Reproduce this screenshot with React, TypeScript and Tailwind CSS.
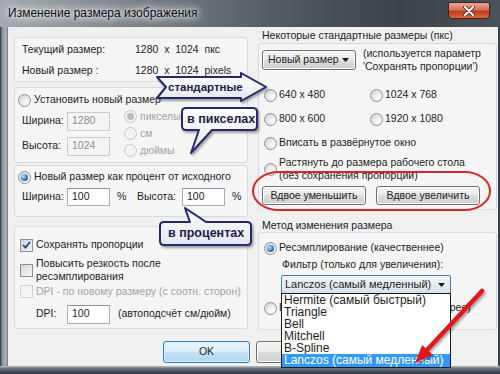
import React from "react";

type Mark = { checked?: boolean; disabled?: boolean };

const Radio: React.FC<Mark> = ({ checked, disabled }) => (
  <span
    className={
      "flex h-[13px] w-[13px] shrink-0 items-center justify-center rounded-full border " +
      (disabled
        ? "border-[#c4c7ca] bg-[#f3f3f3]"
        : "border-[#8f9295] bg-[radial-gradient(circle_at_70%_70%,#ffffff,#d8dadc_75%)]")
    }
  >
    {checked && (
      <span
        className={
          "h-[7px] w-[7px] rounded-full " +
          (disabled
            ? "bg-[#b9bdc1]"
            : "bg-[radial-gradient(circle_at_35%_35%,#b4e2ff,#2a70ba_60%,#12447c)]")
        }
      />
    )}
  </span>
);

const Check: React.FC<Mark> = ({ checked, disabled }) => (
  <span
    className={
      "flex h-[13px] w-[13px] shrink-0 items-center justify-center border " +
      (disabled
        ? "border-[#d0d2d4] bg-[#f5f5f5]"
        : checked
        ? "border-[#8f9295] bg-[linear-gradient(135deg,#c4d3e6,#f2f6fb)]"
        : "border-[#8f9295] bg-[linear-gradient(135deg,#d3d5d7,#fafafa)]")
    }
  >
    {checked && (
      <svg width="9" height="8" viewBox="0 0 9 8">
        <path d="M1 4 L3.5 6.6 L8 1" fill="none" stroke="#2d416c" strokeWidth="1.8" />
      </svg>
    )}
  </span>
);

const Field: React.FC<{ value: string; disabled?: boolean; className?: string }> = ({
  value,
  disabled,
  className,
}) => (
  <div
    className={
      "flex w-[43px] items-center border px-[4px] " +
      (disabled
        ? "border-[#c9cdd2] bg-[#f4f4f4] text-[#8d8d8d] "
        : "border-[#abadb3] border-t-[#8e939a] bg-white ") +
      (className ?? "h-[19px]")
    }
  >
    {value}
  </div>
);

const Btn: React.FC<{ className?: string; primary?: boolean; children: React.ReactNode }> = ({
  className,
  primary,
  children,
}) => (
  <div
    className={
      "flex items-center rounded-[3px] border " +
      (primary
        ? "border-[#3c7fb1] bg-[linear-gradient(#eaf5fc,#d9eefa_49%,#c2e3f6_50%,#acd6f0)] shadow-[inset_0_0_0_1px_#d8effc] "
        : "border-[#707070] bg-[linear-gradient(#f2f2f2,#ebebeb_49%,#dddddd_50%,#cfcfcf)] shadow-[inset_0_0_0_1px_#fcfcfc] ") +
      (className ?? "")
    }
  >
    {children}
  </div>
);

const Arrow: React.FC = () => (
  <svg width="7" height="4" viewBox="0 0 7 4">
    <path d="M0 0 H7 L3.5 4 Z" fill="#1a1a1a" />
  </svg>
);

const Group: React.FC<{ className: string; children: React.ReactNode }> = ({ className, children }) => (
  <div className={"flex flex-col rounded-[3px] border border-[#d5dbe0] bg-[#f5f5f5] " + className}>
    {children}
  </div>
);

export default function App() {
  const filters = ["Hermite (самый быстрый)", "Triangle", "Bell", "Mitchell", "B-Spline"];

  return (
    <div className="relative h-[374px] w-[500px] overflow-hidden whitespace-nowrap bg-[#3f464e] font-['Liberation_Sans',Arial,sans-serif] text-[10.5px] text-[#1e1e1e]">
      {/* заголовок окна */}
      <div className="flex h-[27px] bg-[linear-gradient(90deg,#a4aab0,#7c848c_25%,#535b63_55%,#3b4249_80%,#4b535b)]">
        <span className="ml-[8px] mt-[6px] text-[12px] leading-[15px] text-[#111] [text-shadow:0_0_4px_#eef1f3,0_0_8px_#eef1f3,0_0_12px_#eef1f3]">
          Изменение размера изображения
        </span>
        <div className="ml-auto mr-[10px] mt-[2px] flex h-[17px] w-[42px] items-center justify-center rounded-b-[4px] rounded-t-[2px] border border-[#4b1f16] bg-[linear-gradient(#eaa797,#d5735e_45%,#bf3a1e_55%,#d8683e)]">
          <svg width="12" height="10" viewBox="0 0 12 10">
            <path d="M2 1 L10 9 M10 1 L2 9" stroke="#5a2015" strokeWidth="3.6" strokeLinecap="round" />
            <path d="M2 1 L10 9 M10 1 L2 9" stroke="#ffffff" strokeWidth="2" strokeLinecap="round" />
          </svg>
        </div>
      </div>

      <div className="flex h-[339px]">
        <div className="w-[8px] bg-[linear-gradient(90deg,#2e343a,#8e969e_30%,#aab1b8_75%,#6f777f)]" />

        <div className="flex w-[490px] flex-col bg-[#f0f0f0]">
          <div className="flex">
            {/* левая колонка */}
            <div className="ml-[6px] flex w-[234px] flex-col pt-[10px]">
              <Group className="h-[45px] gap-[1px] pt-[2px]">
                <div className="flex h-[20px] items-center pl-[7px]">
                  <span className="w-[113px]">Текущий размер:</span>
                  <span className="whitespace-pre">1280  x  1024  пкс</span>
                </div>
                <div className="flex h-[20px] items-center pl-[7px]">
                  <span className="w-[113px]">Новый размер  :</span>
                  <span className="whitespace-pre">1280  x  1024  pixels</span>
                </div>
              </Group>

              <Group className="mt-[5px] h-[76px] pt-[2px]">
                <div className="flex h-[20px] items-center gap-[3px] pl-[3px]">
                  <Radio />
                  <span>Установить новый размер</span>
                </div>
                <div className="flex">
                  <div className="flex flex-col gap-[5px] pl-[7px] pt-[1px]">
                    <div className="flex h-[20px] items-center">
                      <span className="w-[45px]">Ширина:</span>
                      <Field value="1280" disabled />
                    </div>
                    <div className="flex h-[20px] items-center">
                      <span className="w-[45px]">Высота:</span>
                      <Field value="1024" disabled />
                    </div>
                  </div>
                  <div className="-mt-[2px] ml-[14px] flex flex-col text-[#a3a3a3]">
                    <div className="flex h-[17px] items-center gap-[3px]">
                      <Radio checked disabled />
                      <span>пикселы</span>
                    </div>
                    <div className="flex h-[17px] items-center gap-[3px]">
                      <Radio disabled />
                      <span>см</span>
                    </div>
                    <div className="flex h-[17px] items-center gap-[3px]">
                      <Radio disabled />
                      <span>дюймы</span>
                    </div>
                  </div>
                </div>
              </Group>

              <Group className="mt-[2px] h-[52px] pt-[1px]">
                <div className="flex h-[20px] items-center gap-[3px] pl-[3px]">
                  <Radio checked />
                  <span>Новый размер как процент от исходного</span>
                </div>
                <div className="flex h-[19px] items-center pl-[7px]">
                  <span className="w-[45px]">Ширина:</span>
                  <Field value="100" className="h-[18px]" />
                  <span className="ml-[7px] w-[13px]">%</span>
                  <span className="ml-[7px] w-[45px]">Высота:</span>
                  <Field value="100" className="h-[18px]" />
                  <span className="ml-[7px]">%</span>
                </div>
              </Group>

              <Group className="mt-[9px] h-[103px] pt-[9px]">
                <div className="flex h-[18px] items-center gap-[3px] pl-[5px]">
                  <Check checked />
                  <span>Сохранять пропорции</span>
                </div>
                <div className="mt-[3px] flex items-center gap-[3px] pl-[5px]">
                  <Check />
                  <span className="leading-[13px]">
                    Повысить резкость после
                    <br />
                    ресэмплирования
                  </span>
                </div>
                <div className="flex h-[17px] items-center gap-[3px] pl-[5px] text-[#a3a3a3]">
                  <Check disabled />
                  <span>DPI - по новому размеру (с соотн. сторон)</span>
                </div>
                <div className="mt-[4px] flex h-[20px] items-center pl-[21px]">
                  <span className="w-[31px]">DPI:</span>
                  <Field value="100" />
                  <span className="ml-[8px]">(автоподсчёт см/дюйм)</span>
                </div>
              </Group>
            </div>

            {/* правая колонка */}
            <div className="ml-[10px] flex w-[239px] flex-col">
              <div className="mt-[2px] h-[13px] pl-[4px] leading-[13px]">Некоторые стандартные размеры (пкс)</div>
              <Group className="mt-[1px] h-[167px]">
                <div className="mt-[6px] flex items-start">
                  <Btn className="ml-[3px] h-[20px] w-[94px] justify-between pl-[5px] pr-[6px]">
                    <span>Новый размер</span>
                    <Arrow />
                  </Btn>
                  <span className="-mt-[3px] ml-[7px] leading-[13px]">
                    (используется параметр
                    <br />
                    'Сохранять пропорции')
                  </span>
                </div>
                <div className="mt-[10px] grid grid-cols-[106px_1fr] pl-[5px]">
                  <div className="flex h-[24px] items-center gap-[2px]">
                    <Radio />
                    <span>640 x 480</span>
                  </div>
                  <div className="flex h-[24px] items-center gap-[2px]">
                    <Radio />
                    <span>1024 x 768</span>
                  </div>
                  <div className="flex h-[24px] items-center gap-[2px]">
                    <Radio />
                    <span>800 x 600</span>
                  </div>
                  <div className="flex h-[24px] items-center gap-[2px]">
                    <Radio />
                    <span>1920 x 1080</span>
                  </div>
                </div>
                <div className="flex h-[24px] items-center gap-[2px] pl-[5px]">
                  <Radio />
                  <span>Вписать в развёрнутое окно</span>
                </div>
                <div className="flex items-center gap-[2px] pl-[5px] pt-[1px]">
                  <Radio />
                  <span className="leading-[13px]">
                    Растянуть до размера рабочего стола
                    <br />
                    (без сохранения пропорций)
                  </span>
                </div>
                <div className="mt-[4px] flex gap-[10px] pl-[3px]">
                  <Btn className="h-[19px] w-[104px] justify-center">Вдвое уменьшить</Btn>
                  <Btn className="h-[19px] w-[104px] justify-center">Вдвое увеличить</Btn>
                </div>
              </Group>

              <div className="mt-[9px] h-[13px] pl-[4px] leading-[13px]">Метод изменения размера</div>
              <Group className="h-[98px]">
                <div className="mt-[5px] flex h-[20px] items-center gap-[2px] pl-[5px]">
                  <Radio checked />
                  <span>Ресэмплирование (качественнее)</span>
                </div>
                <div className="flex h-[14px] items-center pl-[23px]">Фильтр (только для увеличения):</div>
                <div className="mt-[3px] pl-[22px]">
                  <div className="flex h-[19px] w-[170px] items-center justify-between rounded-[2px] border border-[#3c7fb1] bg-[linear-gradient(#f1f6fa,#e3ebf2_50%,#d6e1ea)] pl-[3px] pr-[5px] text-[11px]">
                    <span>Lanczos (самый медленный)</span>
                    <Arrow />
                  </div>
                </div>
                <div className="mt-[4px] flex h-[20px] items-center gap-[2px] pl-[5px]">
                  <Radio />
                  <span>Простое изменение размера (быстрее)</span>
                </div>
              </Group>
            </div>
          </div>

          <div className="mt-[11px] flex">
            <Btn primary className="ml-[155px] h-[22px] w-[87px] justify-center">
              OK
            </Btn>
            <Btn className="ml-[6px] h-[22px] w-[87px] justify-center">Отмена</Btn>
          </div>
        </div>

        <div className="w-[2px] bg-[#3a4148]" />
      </div>

      <div className="h-[8px] bg-[linear-gradient(#b9c0c6,#6d7680_30%,#2d343b)]" />

      {/* раскрытый список фильтров */}
      <div className="absolute left-[281px] top-[293px] flex w-[170px] flex-col border border-[#1a1a1a] bg-white text-[12px]">
        {filters.map((f) => (
          <div key={f} className="h-[12px] pl-[2px] leading-[12px]">
            {f}
          </div>
        ))}
        <div className="h-[13px] bg-[#3399ff] pl-[2px] leading-[13px] text-white">Lanczos (самый медленный)</div>
      </div>

      {/* пометки поверх снимка */}
      <svg className="pointer-events-none absolute left-0 top-0" width="500" height="374" viewBox="0 0 500 374">
        <defs>
          <filter id="sh" x="-20%" y="-20%" width="140%" height="160%">
            <feDropShadow dx="1.5" dy="2" stdDeviation="1.2" floodColor="#000" floodOpacity="0.35" />
          </filter>
          <linearGradient id="fill" x1="0" y1="0" x2="0" y2="1">
            <stop offset="0" stopColor="#ffffff" />
            <stop offset="1" stopColor="#e4e6ee" />
          </linearGradient>
        </defs>
        <path
          d="M157 77 H241 V73 L266 87 L241 101 V98 H157 L166 87 Z"
          fill="url(#fill)"
          stroke="#252a6c"
          strokeWidth="2"
          strokeLinejoin="round"
          filter="url(#sh)"
        />
        <path
          d="M186 108 H253 Q257 108 257 112 V126 Q257 130 253 130 H212 L191 153 L199 130 H186 Q182 130 182 126 V112 Q182 108 186 108 Z"
          fill="url(#fill)"
          stroke="#252a6c"
          strokeWidth="2"
          strokeLinejoin="round"
          filter="url(#sh)"
        />
        <path
          d="M164 222 H190 L185 208 L206 222 H247 Q251 222 251 226 V241 Q251 245 247 245 H164 Q160 245 160 241 V226 Q160 222 164 222 Z"
          fill="url(#fill)"
          stroke="#252a6c"
          strokeWidth="2"
          strokeLinejoin="round"
          filter="url(#sh)"
        />
        <rect x="253" y="172" width="237" height="38" rx="26" ry="19" fill="none" stroke="#d7262b" strokeWidth="2" />
        <g filter="url(#sh)">
          <line x1="482" y1="291" x2="427" y2="350" stroke="#e3191b" strokeWidth="4.5" strokeLinecap="round" />
          <polygon points="415,363 432.5,354.6 422.2,345" fill="#e3191b" />
        </g>
      </svg>

      <span className="absolute left-[168px] top-[80px] text-[11.5px] font-bold leading-[14px] text-[#1b1e4a]">стандартные</span>
      <span className="absolute left-[187px] top-[112px] text-[12.5px] font-bold leading-[15px] text-[#1b1e4a]">в пикселах</span>
      <span className="absolute left-[168px] top-[226px] text-[12.5px] font-bold leading-[15px] text-[#1b1e4a]">в процентах</span>
    </div>
  );
}
